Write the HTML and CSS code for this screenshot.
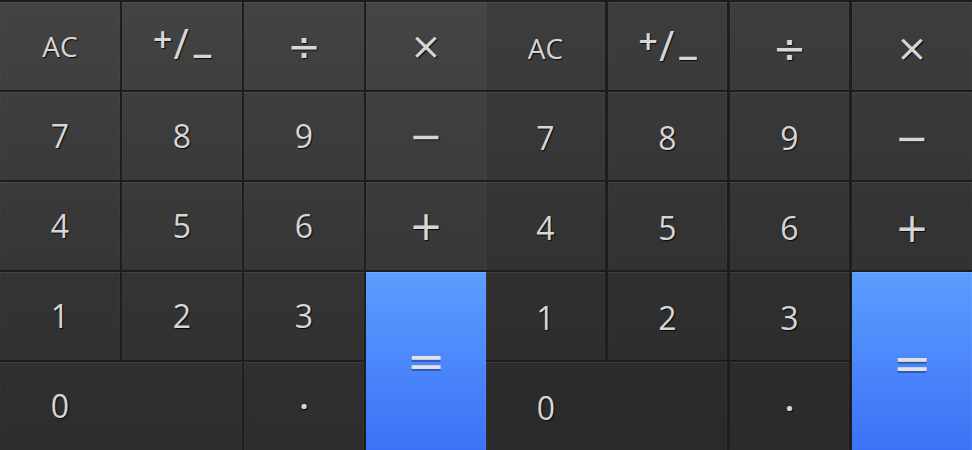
FILE: index.html
```html
<!DOCTYPE html>
<html lang="en">
<head>
<meta charset="utf-8">
<title>Calculator</title>
<link rel="stylesheet" href="styles.css">
</head>
<body>
<div class="screen">
  <div class="pad pad-a">
    <div class="key r1"><span class="t-ac">AC</span></div>
    <div class="key r1"><span class="pm"><span class="pm-plus">+</span><span class="pm-slash">/</span><span class="pm-minus">−</span></span></div>
    <div class="key r1"><span class="op op-div">÷</span></div>
    <div class="key r1 opcol"><span class="op op-mul">×</span></div>
    <div class="key r2"><span class="dg">7</span></div>
    <div class="key r2"><span class="dg">8</span></div>
    <div class="key r2"><span class="dg">9</span></div>
    <div class="key r2 opcol"><span class="op op-sub">−</span></div>
    <div class="key r3"><span class="dg">4</span></div>
    <div class="key r3"><span class="dg">5</span></div>
    <div class="key r3"><span class="dg">6</span></div>
    <div class="key r3 opcol"><span class="op op-add">+</span></div>
    <div class="key r4"><span class="dg">1</span></div>
    <div class="key r4"><span class="dg">2</span></div>
    <div class="key r4"><span class="dg">3</span></div>
    <div class="key eq"><span class="op op-eq">=</span></div>
    <div class="key r5 zero"><span class="dg zero-t">0</span></div>
    <div class="key r5"><span class="dg dot">·</span></div>
  </div>
  <div class="pad pad-b">
    <div class="key r1"><span class="t-ac">AC</span></div>
    <div class="key r1"><span class="pm"><span class="pm-plus">+</span><span class="pm-slash">/</span><span class="pm-minus">−</span></span></div>
    <div class="key r1"><span class="op op-div">÷</span></div>
    <div class="key r1"><span class="op op-mul">×</span></div>
    <div class="key r2"><span class="dg">7</span></div>
    <div class="key r2"><span class="dg">8</span></div>
    <div class="key r2"><span class="dg">9</span></div>
    <div class="key r2"><span class="op op-sub">−</span></div>
    <div class="key r3"><span class="dg">4</span></div>
    <div class="key r3"><span class="dg">5</span></div>
    <div class="key r3"><span class="dg">6</span></div>
    <div class="key r3"><span class="op op-add">+</span></div>
    <div class="key r4"><span class="dg">1</span></div>
    <div class="key r4"><span class="dg">2</span></div>
    <div class="key r4"><span class="dg">3</span></div>
    <div class="key eq"><span class="op op-eq">=</span></div>
    <div class="key r5 zero"><span class="dg zero-t">0</span></div>
    <div class="key r5"><span class="dg dot">·</span></div>
  </div>
</div>
</body>
</html>
```

FILE: styles.css
```css
html, body {
  margin: 0;
  padding: 0;
  background: #1d1d1d;
  overflow: hidden;
}

.screen {
  display: flex;
  width: 972px;
  height: 450px;
  overflow: hidden;
  font-family: "Open Sans", "Noto Sans", sans-serif;
  color: #d6d6d6;
}

.pad {
  display: grid;
  width: 486px;
  height: 450px;
  box-sizing: border-box;
  padding-top: 2px;
  grid-template-rows: repeat(5, 88px);
  row-gap: 2px;
}

.pad-a {
  grid-template-columns: repeat(4, 120px);
  column-gap: 2px;
}

.pad-b {
  grid-template-columns: 119px 119px 119px 120px;
  column-gap: 3px;
}

.key {
  display: flex;
  align-items: center;
  justify-content: center;
  box-shadow: inset 0 1px 0 rgba(255, 255, 255, 0.07),
              inset 1px 0 0 rgba(255, 255, 255, 0.025),
              inset -1px 0 0 rgba(255, 255, 255, 0.025);
  text-shadow: 1px 1px 1px rgba(0, 0, 0, 0.85);
  line-height: 1;
}

.pad-a .r1 { background: linear-gradient(#434343, #3f3f3f); }
.pad-a .r2 { background: linear-gradient(#3e3e3e, #3a3a3a); }
.pad-a .r3 { background: linear-gradient(#3a3a3a, #363636); }
.pad-a .r4 { background: linear-gradient(#343434, #313131); }
.pad-a .r5 { background: linear-gradient(#303030, #2d2d2d); }
.pad-a .r1.opcol { background: linear-gradient(#454545, #414141); }
.pad-a .r2.opcol { background: linear-gradient(#404040, #3c3c3c); }
.pad-a .r3.opcol { background: linear-gradient(#3b3b3b, #383838); }

.pad-b .r1 { background: linear-gradient(#3d3d3d, #3a3a3a); }
.pad-b .r2 { background: linear-gradient(#393939, #363636); }
.pad-b .r3 { background: linear-gradient(#353535, #323232); }
.pad-b .r4 { background: linear-gradient(#303030, #2d2d2d); }
.pad-b .r5 { background: linear-gradient(#2c2c2c, #2a2a2a); }

.pad-b .key > span {
  position: relative;
  top: 2px;
}

.eq {
  grid-column: 4;
  grid-row: 4 / span 2;
  background: linear-gradient(#5b9dff, #3c72f6);
  box-shadow: inset 0 1px 0 rgba(255, 255, 255, 0.12),
              inset -1px 0 0 rgba(255, 255, 255, 0.06);
  text-shadow: 0 2px 0 rgba(20, 50, 140, 0.55);
  color: #e2e2e2;
}

.zero {
  grid-column: 1 / span 2;
  justify-content: flex-start;
}

.zero-t {
  width: 120px;
  text-align: center;
}

.dg {
  font-size: 32px;
}

.dot {
  font-size: 30px;
  font-weight: 700;
}

.t-ac {
  font-size: 28px;
}

.pm {
  font-size: 42px;
  line-height: 1;
  white-space: nowrap;
  margin-left: 2px;
}
.pm-plus {
  font-family: "DejaVu Sans", sans-serif;
  font-size: 26px;
  font-weight: 700;
  vertical-align: 11px;
}
.pm-slash {
  font-size: 42px;
}
.pm-minus {
  font-family: "DejaVu Sans", sans-serif;
  font-size: 28px;
  font-weight: 700;
  vertical-align: -6px;
  margin-left: 2px;
}

.op {
  font-family: "DejaVu Sans", sans-serif;
}
.op-div { font-size: 40px; }
.op-mul { font-size: 38px; }
.op-sub { font-size: 40px; }
.op-add { font-size: 40px; }
.op-eq { font-size: 46px; }
```
